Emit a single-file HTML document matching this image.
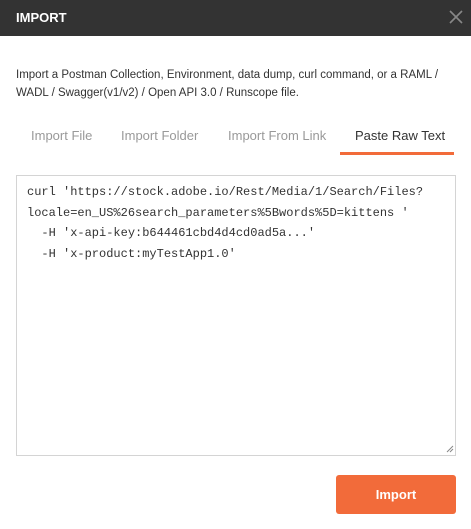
<!DOCTYPE html>
<html><head><style>
body{margin:0;width:471px;height:529px;background:#fff;font-family:"Liberation Sans",sans-serif;position:relative;overflow:hidden}
.hd{position:absolute;left:0;top:0;width:471px;height:36px;background:#333}
.hd .t{position:absolute;left:16px;top:10px;color:#fff;font-size:13px;font-weight:bold}
.desc{position:absolute;left:16px;top:66px;width:440px;font-size:11.5px;line-height:18px;color:#333}
.tab{position:absolute;top:128px;font-size:13px;color:#999}
.ul{position:absolute;left:340px;top:152px;width:114px;height:3px;background:#f26b3a}
.ta{position:absolute;left:16px;top:175px;width:438px;height:279px;border:1px solid #d4d4d4;box-sizing:content-box}
.code{position:absolute;left:27px;top:182px;font-family:"Liberation Mono",monospace;font-size:12px;line-height:20.5px;color:#333;white-space:pre}
.btn{position:absolute;left:336px;top:475px;width:120px;height:39px;background:#f26b3a;border-radius:3px;color:#fff;font-size:13px;font-weight:bold;text-align:center;line-height:39px}
</style></head><body>
<div class="hd"><div class="t">IMPORT</div>
<svg style="position:absolute;left:449px;top:10px" width="14" height="14"><path d="M1 1L13 13M13 1L1 13" stroke="#888" stroke-width="1.6"/></svg></div>
<div class="desc">Import a Postman Collection, Environment, data dump, curl command, or a RAML / WADL / Swagger(v1/v2) / Open API 3.0 / Runscope file.</div>
<div class="tab" style="left:31px">Import File</div>
<div class="tab" style="left:121px">Import Folder</div>
<div class="tab" style="left:228px">Import From Link</div>
<div class="tab" style="left:355px;color:#333">Paste Raw Text</div>
<div class="ul"></div>
<div class="ta"></div>
<div class="code">curl 'https://stock.adobe.io/Rest/Media/1/Search/Files?
locale=en_US%26search_parameters%5Bwords%5D=kittens '
  -H 'x-api-key:b644461cbd4d4cd0ad5a...'
  -H 'x-product:myTestApp1.0'</div>
<svg style="position:absolute;left:446px;top:445px" width="8" height="8"><path d="M1 7L7 1M4 7L7 4" stroke="#888" stroke-width="1"/></svg>
<div class="btn">Import</div>
</body></html>
